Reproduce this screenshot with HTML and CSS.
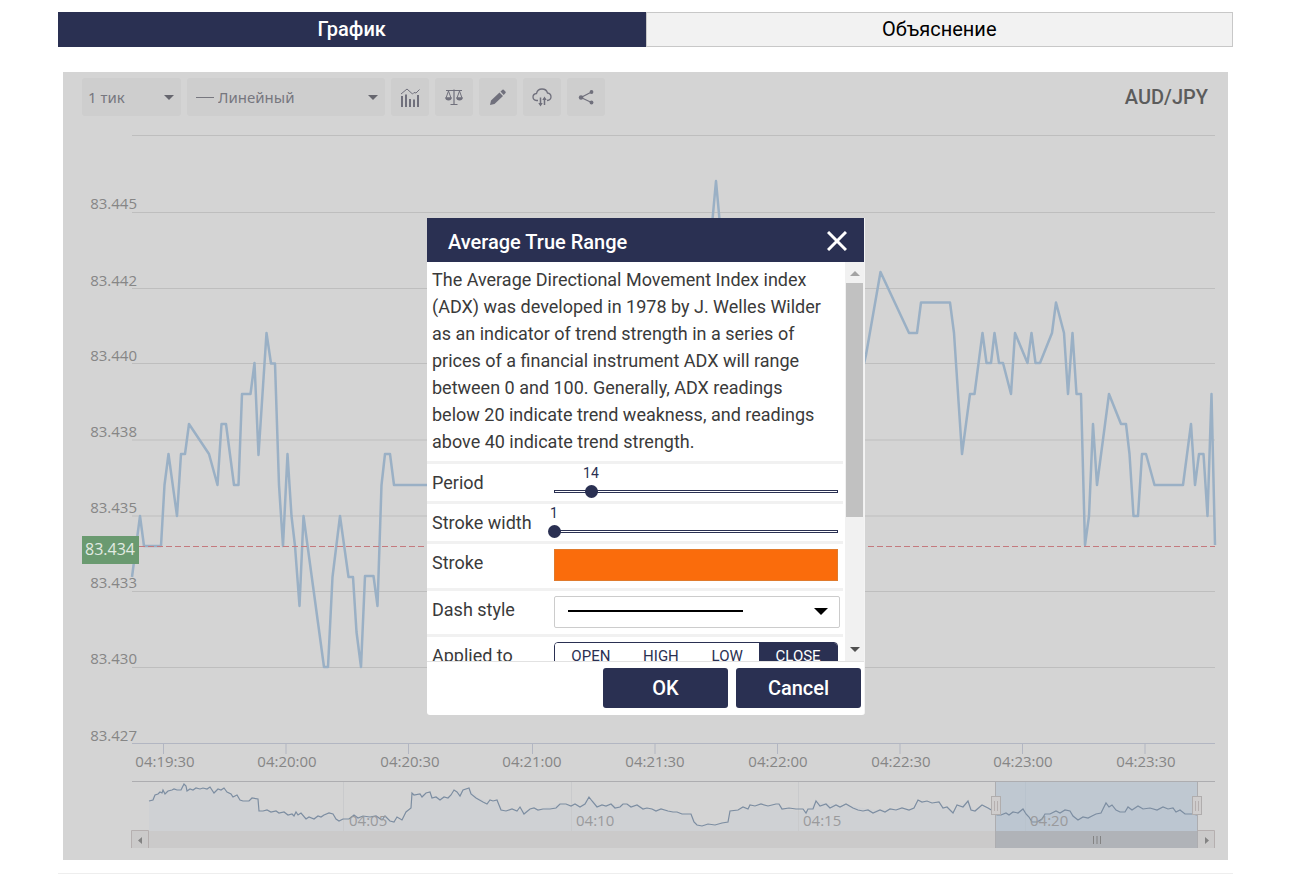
FILE: index.html
```html
<!DOCTYPE html>
<html lang="ru">
<head>
<meta charset="utf-8">
<meta name="viewport" content="width=device-width, initial-scale=1">
<title>AUD/JPY</title>
<link rel="stylesheet" href="styles.css">
</head>
<body>
<main class="page">
  <nav class="tabs">
    <button type="button" class="tab tab-active">График</button>
    <button type="button" class="tab">Объяснение</button>
  </nav>

  <section class="chart">
    <header class="toolbar">
      <label class="picker picker-period">
        <select class="picker-select" aria-label="Период"><option>1 тик</option></select>
      </label>
      <label class="picker picker-type">
        <span class="picker-line"></span>
        <select class="picker-select" aria-label="Тип графика"><option>Линейный</option></select>
      </label>
      <button type="button" class="tool" aria-label="Индикаторы">
        <svg width="22" height="22" viewBox="0 0 22 22"><path d="M3 10v11M7 8.500v12.500M11 13v8M15 13.500v7.500M19 9v12" stroke-width="2"/><path d="M2 8l6-5 5.500 5 1.500-1.500 2 .5 3.500-3.500" stroke-width="1"/></svg>
      </button>
      <button type="button" class="tool" aria-label="Сравнение">
        <svg width="20" height="20" viewBox="0 0 20 20"><path d="M2 3.500h16M10 2.500v14.500M6.500 17.500h7" stroke-width="1.200"/><path d="M4.500 4L2 11h5zM15.500 4L13 11h5z" stroke-width="1"/><path d="M1 10.500h7q-.5 3-3.500 3t-3.500-3zM12 10.500h7q-.5 3-3.500 3t-3.500-3z" class="solid"/></svg>
      </button>
      <button type="button" class="tool" aria-label="Рисование">
        <svg width="18" height="18" viewBox="0 0 18 18"><path d="M1 17l1-4.500 8.500-8 3.500 3.500-8.500 8zM11.500 3.600l2-1.900q.6-.4 1.200.1l1.900 2q.5.600-.1 1.200L14.700 7z" class="solid"/></svg>
      </button>
      <button type="button" class="tool" aria-label="Загрузка">
        <svg width="20" height="20" viewBox="0 0 20 20"><path d="M6 13.500H4.500Q1 13 1 10t3.500-3.500Q5.500 2 10 2t5.500 4q3.500.5 3.500 4 0 3-4 3.500" stroke-width="1.300"/><path d="M8.500 10.500v7M12.500 18v-7" stroke-width="1.500"/><path d="M6.300 16h4.400L8.500 19.500zM10.300 13h4.400L12.500 9.500z" class="solid"/></svg>
      </button>
      <button type="button" class="tool" aria-label="Поделиться">
        <svg width="18" height="18" viewBox="0 0 18 18"><path d="M14.500 4L4 9.500l10.500 5" stroke-width="1.200"/><circle cx="4" cy="9.500" r="2.200" class="solid"/><circle cx="14.500" cy="4" r="1.900" class="solid"/><circle cx="14.500" cy="14.500" r="1.900" class="solid"/></svg>
      </button>
      <h1 class="symbol">AUD/JPY</h1>
    </header>

    <svg class="plot" viewBox="63 116 1165 744" role="img" aria-label="AUD/JPY">
      <path class="grid" d="M132 135.500H1215M132 212.500H1215M132 288.500H1215M132 363.500H1215M132 440H1215M132 516H1215M132 591.500H1215M132 667.500H1215"/>
      <path class="axis" d="M132 743.500H1215M163.500 744v10M286 744v10M408.500 744v10M532.500 744v10M655 744v10M777.500 744v10M900 744v10M1022.500 744v10M1145 744v10"/>
      <path class="series" d="M132 577L140 516 144 546H161L164.500 485 168.500 454 177 516 181 454H185L189 424 209 454 217.500 485 221.500 424H226L234 485H238.500L242 394H250.500L254.500 363 258.500 455 266.500 333 271 363.500H275L279 485 283 546 287.500 454 291.500 516 295 546 299.500 606 303.500 516 324 667H328L332.500 577 340 516 348.500 577H353L356.500 632 361 667 365 576H373.500L377.500 606 381.500 485 385 454H390L394 485H440L700 333 712 225 716 181 720 225 730 363 850 424 866 355 880.500 272 909 333H917L921 302.500H950L954 333 962 454 970 394H974.500L982.500 333 986.500 363H991L994.500 333 999 363H1003L1011 394 1015 333 1027.500 363 1031.500 333 1035.500 363H1040L1052 333 1056 302.500 1064 333 1068 394 1072.500 333 1076.500 394H1081L1085 545 1089 516 1093 424 1097 485 1109 394 1121 424H1126L1129.500 454 1133.500 516H1138L1142 454H1146L1154.500 485H1183L1191 424 1195 485 1199 454H1203.500L1207.500 516 1211.500 394 1215 545"/>
      <path class="level" d="M139 546.500H1215"/>
      <g class="label label-y">
        <text x="137" y="209">83.445</text>
        <text x="137" y="286">83.442</text>
        <text x="137" y="361">83.440</text>
        <text x="137" y="437">83.438</text>
        <text x="137" y="513">83.435</text>
        <text x="137" y="588">83.433</text>
        <text x="137" y="664">83.430</text>
        <text x="137" y="741">83.427</text>
      </g>
      <rect class="price" x="82" y="536" width="57" height="28"/>
      <text class="price-text" x="110" y="555">83.434</text>
      <g class="label label-x">
        <text x="165" y="767">04:19:30</text>
        <text x="287" y="767">04:20:00</text>
        <text x="410" y="767">04:20:30</text>
        <text x="532" y="767">04:21:00</text>
        <text x="655" y="767">04:21:30</text>
        <text x="778" y="767">04:22:00</text>
        <text x="901" y="767">04:22:30</text>
        <text x="1023" y="767">04:23:00</text>
        <text x="1146" y="767">04:23:30</text>
      </g>

      <path class="nav-area" d="M149 801L155 795 162 792 170 790 184 785 190 790 209 788 214 792 223 789 232 795 243 801 258 799 259 811 280 813 300 816 310 818 325 814 338 820 350 820 365 817 383 819 393 822 402 820 411 809 412 793 430 795 445 798 455 793 468 788 478 798 490 802 497 801 503 810 520 811 540 809 560 804 580 807 589 797 600 806 627 804 660 810 692 815 697 825 715 825 729 822 731 811 750 807 781 805 784 809 806 812 816 802 850 806 875 810 912 809 918 801 940 804 952 812 960 805 968 802 974 810 985 806 996 812 1010 814 1023 809 1033 821 1050 813 1070 811 1078 819 1103 812 1106 803 1120 811 1140 806 1160 809 1180 811 1197 815V831H149z"/>
      <path class="nav-grid" d="M343.500 782v49M571.500 782v49M798.500 782v49M1025.500 782v49"/>
      <rect class="nav-window" x="996" y="782" width="201" height="49"/>
      <path class="nav-line" d="M149 801L153 800 155 795 158 794 160 792 162 793 163 790 165 794 168 791 172 790 174 789 177 790 181 790 184 784 186 786 187 791 190 789 193 790 196 788 200 789 203 788 207 789 210 787 214 793 218 789 221 790 224 788 227 792 231 794 233 797 237 795 240 800 243 801 249 801 252 798 258 799 259 811 263 811 267 810 271 812 276 811 279 813 284 812 288 815 292 814 294 816 296 812 298 815 301 813 306 819 309 817 314 819 318 816 321 817 324 815 329 813 333 814 336 819 339 821 343 819 349 819 354 815 358 818 363 816 370 817 376 816 382 820 385 816 390 821 394 822 397 817 402 820 406 812 411 808 412 793 414 795 420 794 422 797 426 793 430 792 432 798 436 797 440 800 444 797 448 798 451 795 454 790 457 792 460 796 463 790 469 788 471 794 476 798 483 802 487 804 490 800 493 801 497 800 501 810 506 811 512 809 517 811 520 807 524 814 530 809 534 808 538 810 543 809 550 809 556 808 560 804 566 804 571 806 575 804 580 807 585 804 589 797 592 801 597 807 602 805 606 806 611 804 615 808 620 807 623 804 627 804 631 807 637 805 643 809 647 808 652 809 656 811 661 809 668 811 673 812 677 812 682 814 691 814 694 822 697 825 702 826 708 824 715 825 722 823 728 822 730 811 738 810 743 807 748 809 750 805 755 806 761 804 768 806 776 804 779 804 782 809 789 808 796 809 803 809 806 813 808 809 813 809 816 801 820 806 826 804 830 808 836 805 840 807 846 804 853 808 858 810 863 811 868 810 873 813 880 810 885 812 890 809 896 810 902 808 909 810 914 808 918 800 922 802 927 801 932 803 939 802 943 808 947 807 953 813 957 805 963 807 968 801 971 810 975 811 982 805 988 808 993 811 997 815 1001 815 1006 813 1009 815 1013 812 1018 813 1023 809 1026 814 1029 817 1032 822 1037 822 1042 819 1045 814 1050 814 1056 811 1060 813 1065 810 1070 811 1073 816 1078 820 1083 817 1088 818 1092 816 1096 814 1101 813 1106 803 1109 807 1112 805 1116 810 1120 812 1125 812 1128 807 1132 810 1138 806 1143 809 1150 808 1157 810 1163 807 1168 809 1173 808 1176 812 1180 810 1185 814 1192 814 1197 815"/>
      <g class="label nav-label">
        <text x="349" y="826">04:05</text>
        <text x="576" y="826">04:10</text>
        <text x="803" y="826">04:15</text>
        <text x="1030" y="826">04:20</text>
      </g>
      <rect class="nav-track" x="132" y="831" width="1083" height="17"/>
      <rect class="nav-thumb" x="996" y="831" width="201" height="17"/>
      <path class="nav-frame" d="M132 781.500H1215M995.500 782v66M1197.500 782v66"/>
      <path class="nav-end" d="M131.500 848v-17.500h17v17.500M1197.500 830.500h17v17.500"/>
      <path class="nav-glyph" d="M142 837v7l-4-3.500zM1205 837v7l4-3.500z"/>
      <path class="nav-grip" d="M1093.500 836v8M1097 836v8M1100.500 836v8"/>
      <rect class="nav-handle" x="991.500" y="796.500" width="9" height="18"/>
      <rect class="nav-handle" x="1192.500" y="796.500" width="9" height="18"/>
      <path class="nav-end" d="M994.500 801v10M997.500 801v10M1195.500 801v10M1198.500 801v10"/>
    </svg>

    <div class="overlay">
      <form class="dialog" role="dialog" aria-labelledby="dialog-title">
        <header class="dialog-head">
          <h2 class="dialog-title" id="dialog-title">Average True Range</h2>
          <button type="button" class="dialog-close" aria-label="Close">
            <svg width="20" height="20" viewBox="0 0 20 20"><path d="M1 1l18 18M19 1L1 19"/></svg>
          </button>
        </header>
        <div class="dialog-body">
          <div class="dialog-content">
            <p class="description">The Average Directional Movement Index index (ADX) was developed in 1978 by J. Welles Wilder as an indicator of trend strength in a series of prices of a financial instrument ADX will range between 0 and 100. Generally, ADX readings below 20 indicate trend weakness, and readings above 40 indicate trend strength.</p>
            <div class="row">
              <label class="row-label" for="period">Period</label>
              <div class="slider">
                <output class="slider-value" for="period" style="margin-left:13%">14</output>
                <div class="slider-track"><input class="slider-input" type="range" id="period" min="1" max="100" value="14"></div>
              </div>
            </div>
            <div class="row">
              <label class="row-label" for="stroke-width">Stroke width</label>
              <div class="slider">
                <output class="slider-value" for="stroke-width" style="margin-left:0%">1</output>
                <div class="slider-track"><input class="slider-input" type="range" id="stroke-width" min="1" max="10" value="1"></div>
              </div>
            </div>
            <div class="row row-stroke">
              <label class="row-label" for="stroke">Stroke</label>
              <input class="swatch" type="color" id="stroke" value="#fa6c0c">
            </div>
            <div class="row row-dash">
              <label class="row-label" for="dash">Dash style</label>
              <div class="dash"><select class="dash-select" id="dash"><option value="solid" label=" "></option></select></div>
            </div>
            <div class="row row-applied">
              <span class="row-label" id="applied">Applied to</span>
              <div class="segments" role="group" aria-labelledby="applied">
                <button type="button" class="segment">OPEN</button>
                <button type="button" class="segment">HIGH</button>
                <button type="button" class="segment">LOW</button>
                <button type="button" class="segment segment-on" aria-pressed="true">CLOSE</button>
              </div>
            </div>
          </div>
          <div class="scrollbar" aria-hidden="true">
            <span class="scroll-arrow scroll-up"></span>
            <span class="scroll-thumb"></span>
            <span class="scroll-arrow scroll-down"></span>
          </div>
        </div>
        <footer class="dialog-foot">
          <button type="submit" class="action">OK</button>
          <button type="button" class="action">Cancel</button>
        </footer>
      </form>
    </div>
  </section>
  <hr class="rule">
</main>
</body>
</html>
```

FILE: styles.css
```css
* { box-sizing: border-box; }

body {
  margin: 0;
  background: #fff;
  color: #3a3a3a;
  font-family: Roboto, "Liberation Sans", sans-serif;
}

button, select, input {
  margin: 0;
  font-family: inherit;
}

.page { padding: 12px 72px 0 58px; }

/* Tabs */
.tabs { display: grid; grid-template-columns: 1fr 1fr; }

.tab {
  height: 35px;
  padding: 0 0 2px;
  border: 1px solid #c8c8c8;
  background: #f2f2f2;
  color: #000;
  font-size: 20px;
}

.tab-active {
  border-color: #2a3052;
  background: #2a3052;
  color: #fff;
  font-weight: 500;
}

/* Chart panel */
.chart {
  position: relative;
  margin: 25px 5px 13px;
  padding-top: 6px;
  background: #d4d4d4;
}

.toolbar {
  display: flex;
  align-items: center;
  gap: 6px;
  padding: 0 20px 0 19px;
}

.picker {
  position: relative;
  display: flex;
  align-items: center;
  height: 38px;
  padding-left: 6px;
  border-radius: 3px;
  background: #cecece;
}

.picker-period { width: 99px; }
.picker-type { width: 198px; gap: 4px; padding-left: 9px; }

.picker-line { width: 18px; height: 1px; background: #77777f; }

.picker-select {
  flex: 1;
  min-width: 0;
  padding: 0;
  border: 0;
  appearance: none;
  background: none;
  color: #77777f;
  font-family: "Noto Sans", sans-serif;
  font-size: 15px;
}

.picker::after, .dash::after {
  content: "";
  position: absolute;
  top: 50%;
  right: 7px;
  margin-top: -2px;
  border: 5px solid transparent;
  border-top-color: #66666e;
  border-bottom: 0;
  pointer-events: none;
}

.tool {
  display: grid;
  place-items: center;
  width: 38px;
  height: 38px;
  padding: 0;
  border: 0;
  border-radius: 3px;
  background: #cecece;
}

.tool svg { fill: none; stroke: #70707c; }
.tool .solid { fill: #70707c; stroke: none; }

.symbol {
  margin: 0 0 0 auto;
  color: #5c5c5c;
  font-size: 20px;
  font-weight: 500;
}

.plot { display: block; width: 100%; height: auto; }
.plot path { fill: none; }

.grid { stroke: #bebebe; stroke-width: 1; }
.axis { stroke: #b2b6c2; stroke-width: 1; }
.series { stroke: #9ab0c5; stroke-width: 2.5; stroke-linejoin: round; }
.level { stroke: #c47a7e; stroke-width: 1; stroke-dasharray: 6 3; }

.label {
  fill: #868686;
  font-family: "Open Sans", "Noto Sans", sans-serif;
  font-size: 15px;
}

.label-y { text-anchor: end; }
.label-x { text-anchor: middle; }
.nav-label { fill: #9a9a9c; }

.price { fill: #6a9a70; }

.price-text {
  fill: #e2ebe3;
  font-family: "Open Sans", "Noto Sans", sans-serif;
  font-size: 16px;
  text-anchor: middle;
}

.nav-grid { stroke: #c9cacc; }
.plot .nav-area { fill: #cdd0d3; fill-opacity: .8; }
.nav-line { stroke: #7c8da1; stroke-width: 1.2; }
.nav-track { fill: #cbcaca; }
.nav-window { fill: #a9bbce; fill-opacity: .5; }
.nav-thumb { fill: #b0b3b8; }
.nav-frame { stroke: #adadb0; }
.nav-end { stroke: #b5afaf; }
.plot .nav-glyph { fill: #838383; }
.nav-grip { stroke: #838383; }
.nav-handle { fill: #cfcdcd; stroke: #b0adad; }

/* Indicator dialog */
.overlay {
  position: absolute;
  inset: 0;
  display: flex;
  align-items: flex-start;
  justify-content: center;
  padding: 146px 0 0 1px;
}

.dialog {
  width: 438px;
  margin: 0;
  overflow: hidden;
  border-right: 1px solid #f4f4f4;
  border-radius: 0 0 3px 3px;
  background: #fff;
}

.dialog-head {
  display: flex;
  align-items: center;
  justify-content: space-between;
  height: 44px;
  padding: 2px 17px 0 21px;
  background: #2a3052;
}

.dialog-title {
  margin: 0;
  padding-top: 2px;
  color: #fff;
  font-size: 20px;
  font-weight: 500;
}

.dialog-close {
  display: grid;
  place-items: center;
  padding: 0;
  border: 0;
  background: none;
}

.dialog-close svg { fill: none; stroke: #fff; stroke-width: 3; }

.dialog-body {
  display: grid;
  grid-template-columns: 1fr 19px;
  height: 399px;
  overflow: hidden;
}

.dialog-content { min-width: 0; height: 399px; overflow: hidden; padding-right: 2px; }

.description {
  margin: 0;
  padding: 4px 16px 6px 5px;
  font-size: 18px;
  line-height: 27px;
}

.row {
  display: grid;
  grid-template-columns: 122px 1fr;
  height: 40px;
  padding: 5px 5px 0;
  border-top: 3px solid #f1f1f1;
}

.row-stroke { height: 47px; }
.row-dash { height: 46px; }
.row-applied { height: 50px; }

.row-label { font-size: 18px; line-height: 27px; }

.slider-value {
  display: block;
  width: 30px;
  height: 20px;
  font-size: 14px;
  line-height: 8px;
  color: #2a3052;
  text-align: center;
  transform: translateX(-50%);
}

.slider-track {
  display: flex;
  align-items: center;
  height: 3px;
  margin-top: 1px;
  border: 1px solid #2a3052;
}

.slider-input {
  flex: none;
  width: calc(100% + 13px);
  height: 13px;
  margin: 0 -7px;
  appearance: none;
  background: none;
}

.slider-input::-webkit-slider-thumb {
  width: 13px;
  height: 13px;
  appearance: none;
  border-radius: 50%;
  background: #2a3052;
}

.swatch {
  width: 100%;
  height: 32px;
  padding: 0;
  border: 0;
  appearance: none;
  background: none;
}

.swatch::-webkit-color-swatch-wrapper { padding: 0; }
.swatch::-webkit-color-swatch { border: 1px solid #e07a2c; }

.dash { position: relative; height: 32px; margin-right: -2px; }

.dash::after {
  right: 12px;
  margin-top: -4px;
  border-width: 7px;
  border-top-color: #000;
  border-bottom: 0;
}

.dash-select {
  display: block;
  width: 100%;
  height: 32px;
  border: 1px solid #ccc;
  border-radius: 2px;
  appearance: none;
  background: linear-gradient(#000, #000) 13px 13px / 175px 2px no-repeat #fff;
}

.segments {
  display: flex;
  height: 32px;
  border: 1px solid #2a3052;
  border-radius: 4px;
  overflow: hidden;
}

.segment {
  flex: auto;
  padding: 0 15px 4px;
  border: 0;
  background: #fff;
  color: #2a3052;
  font-size: 15px;
}

.segment-on { background: #2a3052; color: #fff; }

.scrollbar {
  display: flex;
  flex-direction: column;
  align-items: center;
  padding: 9px 0;
  background: #f1f1f1;
}

.scroll-arrow { border: 5px solid transparent; }
.scroll-up { border-top: 0; border-bottom-color: #a3a3a3; }
.scroll-down { margin-top: auto; border-bottom: 0; border-top-color: #505050; }
.scroll-thumb { width: 17px; height: 234px; margin-top: 7px; background: #c1c1c1; }

.dialog-foot {
  display: flex;
  justify-content: flex-end;
  gap: 8px;
  padding: 6px 3px 7px;
  border-top: 1px solid #e2e2e2;
}

.action {
  width: 125px;
  height: 40px;
  padding: 0;
  border: 0;
  border-radius: 3px;
  background: #2a3052;
  color: #fff;
  font-size: 20px;
  font-weight: 500;
}

.rule { height: 1px; margin: 0; border: 0; background: #eee; }
```
